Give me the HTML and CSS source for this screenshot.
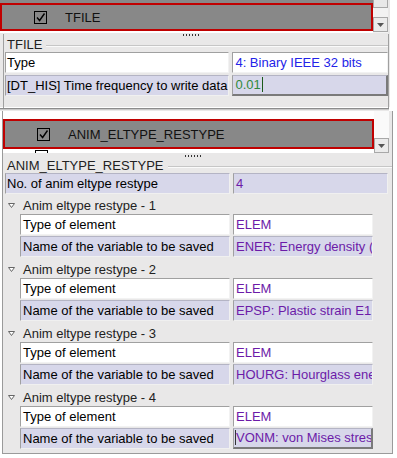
FILE: index.html
```html
<!DOCTYPE html>
<html lang="en">
<head>
    <meta charset="UTF-8">
    <title>Animation settings</title>
    <link rel="stylesheet" href="styles.css">
</head>
<body>
    <div class="pane-top">
        <div class="hdr-box">
            <div class="hdr-list">
                <div class="hdr-item">
                    <div class="frame">
                        <svg class="chk" width="13" height="13" viewBox="0 0 13 13"><rect x="0.5" y="0.5" width="12" height="12" fill="none" stroke="#000"/><path d="M3 6.5l2.6 3L10.5 2.5" fill="none" stroke="#000" stroke-width="1.4"/></svg>
                        <span class="hdr-name">TFILE</span>
                    </div>
                </div>
            </div>
            <div class="vscroll">
                <div class="thumb"></div>
                <div class="arrow top-arrow"><svg width="7" height="4" viewBox="0 0 7 4"><path d="M0 0h7L3.5 4z" fill="#555"/></svg></div>
            </div>
        </div>
        <div class="form">
            <div class="dots"></div>
            <div class="grp-label">TFILE</div>
            <div class="row">
                <div class="cell key">Type</div>
                <div class="cell val blue">4: Binary IEEE 32 bits</div>
            </div>
            <div class="row alt">
                <div class="cell key">[DT_HIS] Time frequency to write data</div>
                <div class="cell val green focus">0.01<span class="caret"></span></div>
            </div>
        </div>
    </div>

    <div class="split"></div>

    <div class="pane-bottom">
        <div class="hdr-box tall">
            <div class="hdr-list list2">
                <div class="hdr-item">
                    <div class="frame big">
                        <svg class="chk" width="13" height="13" viewBox="0 0 13 13"><rect x="0.5" y="0.5" width="12" height="12" fill="none" stroke="#000"/><path d="M3 6.5l2.6 3L10.5 2.5" fill="none" stroke="#000" stroke-width="1.4"/></svg>
                        <span class="hdr-name">ANIM_ELTYPE_RESTYPE</span>
                    </div>
                </div>
                <div class="hdr-next">
                    <svg class="chk" width="13" height="13" viewBox="0 0 13 13"><rect x="0.5" y="0.5" width="12" height="12" fill="#fff" stroke="#000"/></svg>
                </div>
            </div>
            <div class="vscroll white">
                <div class="arrow low-arrow"><svg width="7" height="4" viewBox="0 0 7 4"><path d="M0 0h7L3.5 4z" fill="#555"/></svg></div>
            </div>
        </div>

        <div class="body2">
            <div class="dots"></div>
            <div class="grp-label">ANIM_ELTYPE_RESTYPE</div>
            <div class="row alt">
                <div class="cell key">No. of anim eltype restype</div>
                <div class="cell val purple">4</div>
            </div>

            <div class="grp">
                <div class="grp-title"><svg class="tri" width="7" height="5" viewBox="0 0 7 5"><path d="M0.5 0.5h6L3.5 4.5z" fill="#fff" stroke="#666"/></svg>Anim eltype restype - 1</div>
                <div class="row sub">
                    <div class="cell key">Type of element</div>
                    <div class="cell val purple">ELEM</div>
                </div>
                <div class="row sub alt">
                    <div class="cell key">Name of the variable to be saved</div>
                    <div class="cell val purple">ENER: Energy density (internal)</div>
                </div>
            </div>

            <div class="grp">
                <div class="grp-title"><svg class="tri" width="7" height="5" viewBox="0 0 7 5"><path d="M0.5 0.5h6L3.5 4.5z" fill="#fff" stroke="#666"/></svg>Anim eltype restype - 2</div>
                <div class="row sub">
                    <div class="cell key">Type of element</div>
                    <div class="cell val purple">ELEM</div>
                </div>
                <div class="row sub alt">
                    <div class="cell key">Name of the variable to be saved</div>
                    <div class="cell val purple">EPSP: Plastic strain E1, E2</div>
                </div>
            </div>

            <div class="grp">
                <div class="grp-title"><svg class="tri" width="7" height="5" viewBox="0 0 7 5"><path d="M0.5 0.5h6L3.5 4.5z" fill="#fff" stroke="#666"/></svg>Anim eltype restype - 3</div>
                <div class="row sub">
                    <div class="cell key">Type of element</div>
                    <div class="cell val purple">ELEM</div>
                </div>
                <div class="row sub alt">
                    <div class="cell key">Name of the variable to be saved</div>
                    <div class="cell val purple">HOURG: Hourglass energy</div>
                </div>
            </div>

            <div class="grp">
                <div class="grp-title"><svg class="tri" width="7" height="5" viewBox="0 0 7 5"><path d="M0.5 0.5h6L3.5 4.5z" fill="#fff" stroke="#666"/></svg>Anim eltype restype - 4</div>
                <div class="row sub">
                    <div class="cell key">Type of element</div>
                    <div class="cell val purple">ELEM</div>
                </div>
                <div class="row sub alt">
                    <div class="cell key">Name of the variable to be saved</div>
                    <div class="cell val purple focus"><span class="caret pre"></span>VONM: von Mises stress</div>
                </div>
            </div>
        </div>
    </div>
</body>
</html>
```

FILE: styles.css
```css
* {
    box-sizing: border-box;
}
body {
    margin: 0;
    width: 397px;
    height: 458px;
    overflow: hidden;
    background: #fff;
    font-family: "Liberation Sans", Arial, sans-serif;
    font-size: 13px;
    color: #000;
}

/* header list with the selected keyword */
.pane-top {
    width: 390px;
    height: 107px;
    background: #e9e8e8;
}
.hdr-box {
    display: flex;
    height: 33px;
}
.hdr-box.tall {
    height: 42px;
}
.hdr-list {
    width: 373px;
    background: #fff;
    overflow: hidden;
}
.hdr-list.list2 {
    width: 371px;
    padding-top: 8px;
}
.hdr-item {
    background: #888;
    padding-top: 3px;
}
.list2 .hdr-item {
    padding-top: 0;
}
.frame {
    height: 28px;
    border: 2px solid #c00000;
    display: flex;
    align-items: center;
}
.frame.big {
    height: 30px;
}
.chk {
    margin-left: 32px;
    flex: none;
}
.hdr-name {
    margin-left: 18px;
    color: #111;
}
.hdr-next {
    display: flex;
    align-items: flex-start;
    height: 20px;
    padding-top: 1px;
    padding-left: 30px;
    background: #fff;
}
.hdr-next .chk {
    margin-left: 2px;
}
.vscroll {
    width: 15px;
    background: #f2f2f2;
}
.vscroll.white {
    background: #fafafa;
}
.thumb {
    height: 8px;
    border: 1px solid #a8a8a8;
    border-top: 0;
    background: #e8e8e8;
}
.arrow {
    height: 15px;
    border: 1px solid #a8a8a8;
    background: #ebebeb;
    display: flex;
    align-items: center;
    justify-content: center;
}
.top-arrow {
    margin-top: 9px;
}
.low-arrow {
    margin-top: 27px;
}

/* property forms */
.form {
    margin-left: 3px;
    width: 386px;
    height: 74px;
    border-left: 1px solid #a0a0a0;
    border-right: 1px solid #a0a0a0;
    padding-left: 1px;
}
.dots {
    width: 18px;
    height: 2px;
    margin: 1px 0 0 178px;
    background: repeating-linear-gradient(90deg, #333 0 1px, transparent 1px 3px);
}
.grp-label {
    display: flex;
    align-items: center;
    height: 16px;
    padding-left: 2px;
    color: #222;
}
.grp-label::after {
    content: "";
    flex: 1;
    margin: 4px 0 0 4px;
    border-top: 1px solid #c6c6c6;
    border-bottom: 1px solid #fafafa;
}
.row {
    display: flex;
    gap: 3px;
    height: 21px;
    margin-bottom: 2px;
}
.cell {
    height: 21px;
    border: 1px solid;
    border-color: #a0a0a0 #f2f2f2 #f2f2f2 #a0a0a0;
    background: #fff;
    line-height: 19px;
    white-space: nowrap;
    overflow: hidden;
    padding-left: 1px;
}
.alt .cell {
    background: #d7d7ea;
    border-color: #b4b4c4 #f0f0f0 #f0f0f0 #a0a0a0;
}
.key {
    width: 225px;
}
.val {
    width: 156px;
    padding-left: 2px;
}
.focus {
    border-right: 2px solid #7a7a7a !important;
    border-bottom: 2px solid #7a7a7a !important;
    line-height: 18px;
}
.blue {
    color: #2323e8;
}
.green {
    color: #2f8a3a;
}
.purple {
    color: #6c1ba8;
}
.caret {
    display: inline-block;
    width: 1px;
    height: 15px;
    margin-left: 1px;
    background: #1a5a1a;
    vertical-align: -3px;
}
.caret.pre {
    margin: 0 0 0 -1px;
    background: #333;
}

.split {
    width: 389px;
    height: 3px;
    margin-top: 1px;
    background: linear-gradient(#8c8c8c 0 1px, #c8c8c8 1px 2px, #e9e8e8 2px 3px);
}

.pane-bottom {
    margin-left: 2px;
    width: 391px;
    height: 343px;
    border: 1px solid #9a9a9a;
    border-top: 0;
    background: #e9e8e8;
}
.body2 {
    padding-left: 2px;
}
.body2 .dots {
    margin-top: 2px;
    margin-left: 180px;
}
.body2 .val {
    width: 155px;
}
.body2 > .row {
    margin-bottom: 3px;
}
.grp-title {
    display: flex;
    align-items: center;
    height: 17px;
    padding-left: 3px;
    color: #222;
}
.grp + .grp {
    margin-top: 4px;
}
.tri {
    margin-right: 8px;
}
.row.sub {
    margin-left: 15px;
    margin-bottom: 1px;
}
.sub .key {
    width: 210px;
    padding-left: 2px;
}
.sub .val {
    width: 140px;
}
```
